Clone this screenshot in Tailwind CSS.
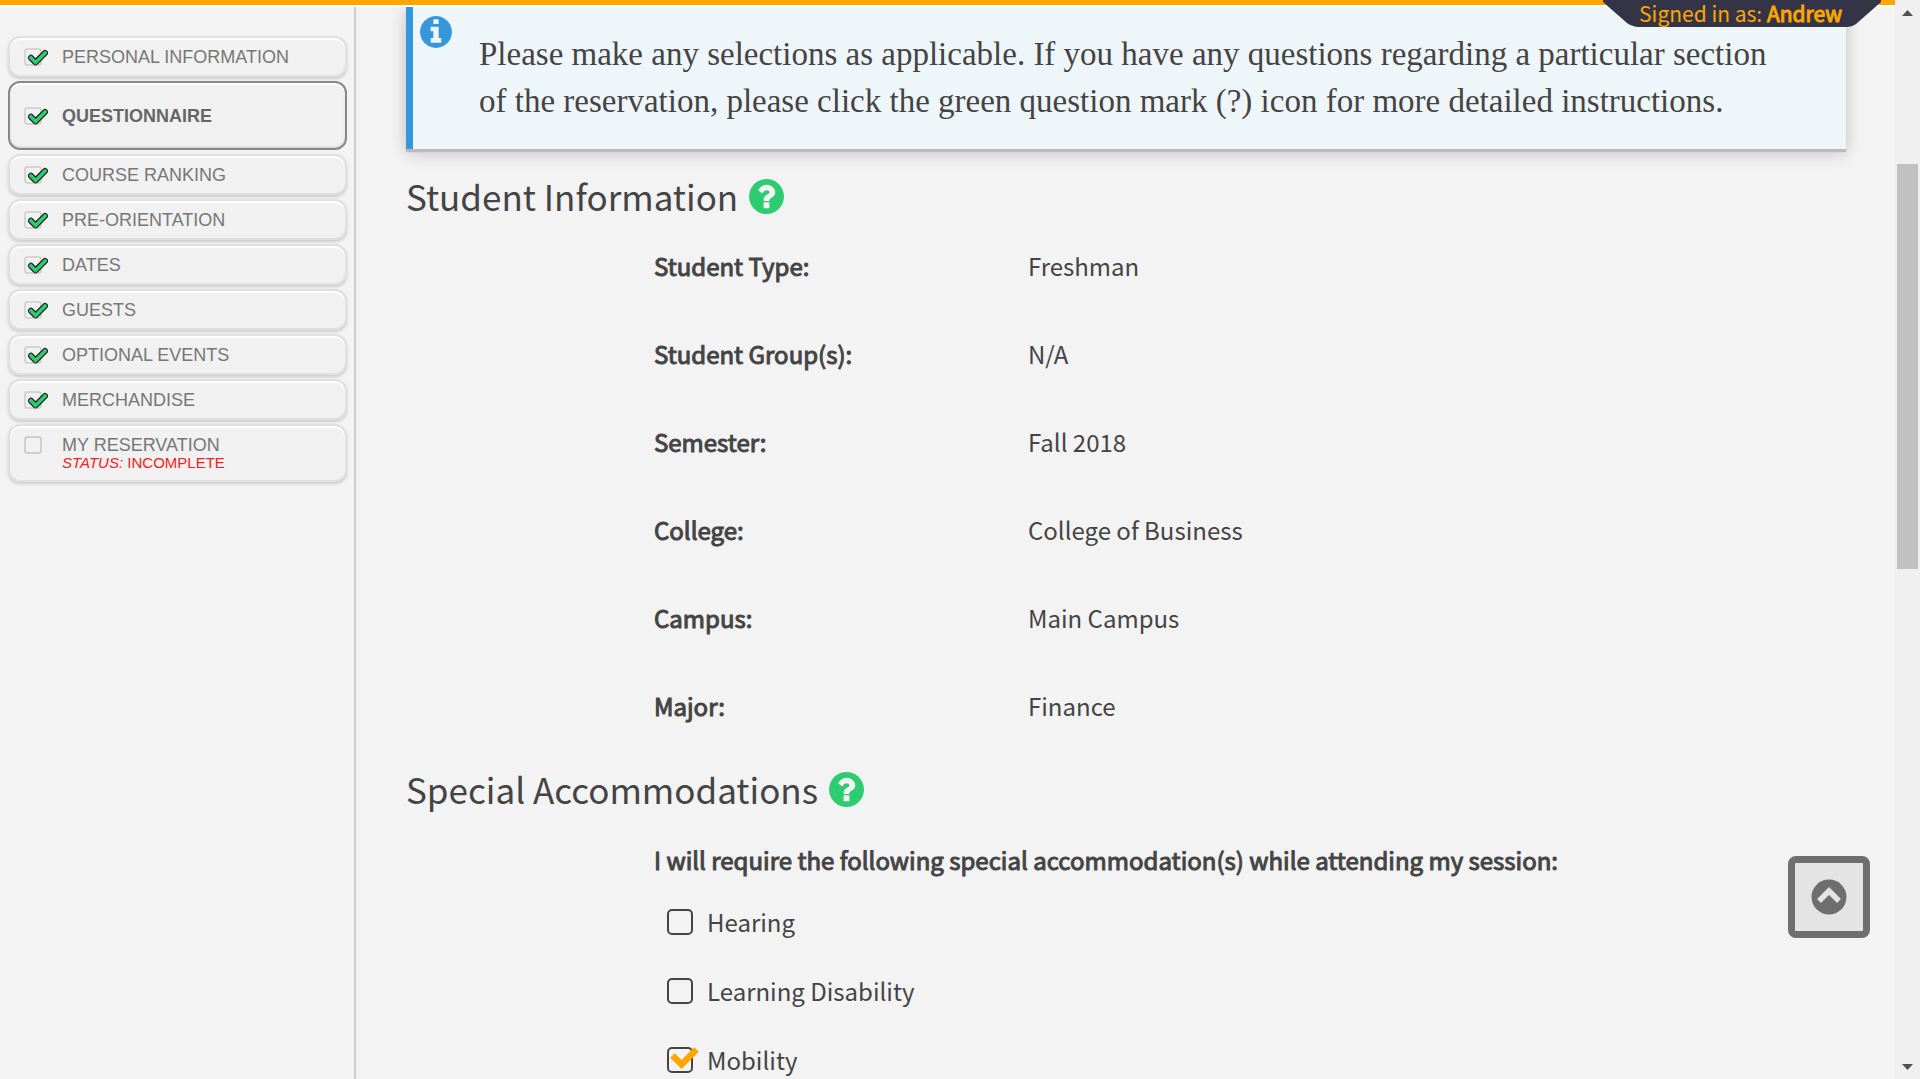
<!DOCTYPE html>
<html lang="en">
<head>
<meta charset="utf-8">
<title>Questionnaire</title>
<script src="https://cdn.jsdelivr.net/npm/@tailwindcss/browser@4"></script>
</head>
<body class="flex h-screen overflow-hidden bg-[#f3f3f3] font-['Noto_Sans_CJK_SC','Noto_Sans',sans-serif] text-[#444]">

<svg class="hidden" aria-hidden="true">
  <symbol id="done" viewBox="0 0 24 20">
    <rect x="1" y="2" width="16" height="16" rx="2.5" fill="none" stroke="#ccc" stroke-width="1.5"/>
    <path d="M7 10.8 11.6 15.4 21 6" fill="none" stroke="#151515" stroke-width="6" stroke-linejoin="round" stroke-linecap="round"/>
    <path d="M7 10.8 11.6 15.4 21 6" fill="none" stroke="#2ecc71" stroke-width="3.6" stroke-linecap="square"/>
  </symbol>
  <symbol id="todo" viewBox="0 0 24 20">
    <rect x="1" y="2" width="16" height="16" rx="2.5" fill="none" stroke="#c4c4c4" stroke-width="1.5"/>
  </symbol>
  <symbol id="help" viewBox="0 0 1536 1536">
    <path fill="#2ecc71" d="M896 1248v-192q0-14-9-23t-23-9H672q-14 0-23 9t-9 23v192q0 14 9 23t23 9h192q14 0 23-9t9-23zM1152 576q0-88-55.500-163T958 297t-170-41q-243 0-371 213-15 24 8 42l132 100q7 6 19 6 16 0 25-12 53-68 86-92 34-24 86-24 48 0 85.500 26t37.500 59q0 38-20 61t-68 45q-63 28-115.500 86.500T640 892v36q0 14 9 23t23 9h192q14 0 23-9t9-23q0-19 21.500-49.500T972 829q32-18 49-28.500t46-35 44.500-48 28-60.500 12.500-81zM1536 768q0 209-103 385.500T1153.500 1433 768 1536t-385.500-103T103 1153.500 0 768t103-385.500T382.500 103 768 0t385.500 103T1433 382.500 1536 768z"/>
  </symbol>
</svg>

<div class="relative flex min-w-0 flex-1 flex-col">
  <header class="shrink-0">
    <div class="h-[5px] bg-[orange]"></div>
    <div class="h-[2px] bg-white"></div>
    <div class="absolute top-0 right-[14px] z-10 h-[27px] w-[278px]">
      <svg class="absolute inset-0 h-full w-full" viewBox="0 0 278 27" preserveAspectRatio="none" aria-hidden="true"><path d="M0 0H278V2L253 24Q249 27 243 27H35Q28 26 24 23L0 2Z" fill="#333546"/></svg>
      <p class="relative pr-[39px] text-right text-[21px] leading-[26px] whitespace-nowrap text-[orange]">Signed in as: <span class="[-webkit-text-stroke:1px_orange]">Andrew</span></p>
    </div>
  </header>

  <div class="flex min-h-0 flex-1">
    <nav class="w-[356px] shrink-0 border-r-2 border-[#ccc] pt-[29px] pr-[7px] pl-[8px] font-['Liberation_Sans',Arial,sans-serif] text-[18px] leading-[18px] text-[#777]">
      <ul class="flex flex-col gap-[4px]">
        <li><a href="#" class="flex h-[41px] items-center gap-[14px] rounded-xl border-2 border-[#e0e0e0] bg-[#f1f1f1] pl-[14px] shadow-[0_2px_3px_#ccc,inset_0_2px_1px_#fff]"><svg class="h-5 w-6"><use href="#done"/></svg>PERSONAL INFORMATION</a></li>
        <li><a href="#" aria-current="page" class="flex h-[69px] items-center gap-[14px] rounded-xl border-2 border-[#888] bg-[#f1f1f1] pl-[14px] font-bold text-[#666] shadow-[inset_0_2px_1px_#fff,inset_0_-1px_2px_#ccc]"><svg class="h-5 w-6"><use href="#done"/></svg>QUESTIONNAIRE</a></li>
        <li><a href="#" class="flex h-[41px] items-center gap-[14px] rounded-xl border-2 border-[#e0e0e0] bg-[#f1f1f1] pl-[14px] shadow-[0_2px_3px_#ccc,inset_0_2px_1px_#fff]"><svg class="h-5 w-6"><use href="#done"/></svg>COURSE RANKING</a></li>
        <li><a href="#" class="flex h-[41px] items-center gap-[14px] rounded-xl border-2 border-[#e0e0e0] bg-[#f1f1f1] pl-[14px] shadow-[0_2px_3px_#ccc,inset_0_2px_1px_#fff]"><svg class="h-5 w-6"><use href="#done"/></svg>PRE-ORIENTATION</a></li>
        <li><a href="#" class="flex h-[41px] items-center gap-[14px] rounded-xl border-2 border-[#e0e0e0] bg-[#f1f1f1] pl-[14px] shadow-[0_2px_3px_#ccc,inset_0_2px_1px_#fff]"><svg class="h-5 w-6"><use href="#done"/></svg>DATES</a></li>
        <li><a href="#" class="flex h-[41px] items-center gap-[14px] rounded-xl border-2 border-[#e0e0e0] bg-[#f1f1f1] pl-[14px] shadow-[0_2px_3px_#ccc,inset_0_2px_1px_#fff]"><svg class="h-5 w-6"><use href="#done"/></svg>GUESTS</a></li>
        <li><a href="#" class="flex h-[41px] items-center gap-[14px] rounded-xl border-2 border-[#e0e0e0] bg-[#f1f1f1] pl-[14px] shadow-[0_2px_3px_#ccc,inset_0_2px_1px_#fff]"><svg class="h-5 w-6"><use href="#done"/></svg>OPTIONAL EVENTS</a></li>
        <li><a href="#" class="flex h-[41px] items-center gap-[14px] rounded-xl border-2 border-[#e0e0e0] bg-[#f1f1f1] pl-[14px] shadow-[0_2px_3px_#ccc,inset_0_2px_1px_#fff]"><svg class="h-5 w-6"><use href="#done"/></svg>MERCHANDISE</a></li>
        <li><a href="#" class="flex h-[58px] items-start gap-[14px] rounded-xl border-2 border-[#e0e0e0] bg-[#f1f1f1] pt-[9px] pl-[14px] shadow-[0_2px_3px_#ccc,inset_0_2px_1px_#fff]"><svg class="h-5 w-6"><use href="#todo"/></svg><span class="pt-px">MY RESERVATION<span class="block text-[15px] text-[#e22]"><em>STATUS:</em> INCOMPLETE</span></span></a></li>
      </ul>
    </nav>

    <main class="min-w-0 flex-1 overflow-hidden pr-[49px] pl-[50px]">
      <section class="flex border-l-[7px] border-[#3498db] bg-[#eff6fa] pb-[24px] shadow-[0_3px_1px_#bbb,0_4px_16px_rgba(0,0,0,0.2)]">
        <svg class="mt-[9px] ml-[7px] h-8 w-8 shrink-0" viewBox="0 0 1536 1536" role="img" aria-label="Information"><path fill="#3498db" d="M1024 1248v-160q0-14-9-23t-23-9h-96V544q0-14-9-23t-23-9H544q-14 0-23 9t-9 23v160q0 14 9 23t23 9h96v320h-96q-14 0-23 9t-9 23v160q0 14 9 23t23 9h448q14 0 23-9t9-23zM896 352V192q0-14-9-23t-23-9H672q-14 0-23 9t-9 23v160q0 14 9 23t23 9h192q14 0 23-9t9-23zM1536 768q0 209-103 385.500T1153.500 1433 768 1536t-385.500-103T103 1153.500 0 768t103-385.500T382.500 103 768 0t385.500 103T1433 382.500 1536 768z"/></svg>
        <p class="ml-[27px] pt-[24px] pr-[64px] font-['Georgia','Liberation_Serif',serif] text-[33px] leading-[47px]">Please make any selections as applicable. If you have any questions regarding a particular section of the reservation, please click the green question mark (?) icon for more detailed instructions.</p>
      </section>

      <h2 class="mt-[23px] flex h-[48px] items-center gap-[11px] text-[35px] leading-[48px]">Student Information <button type="button" aria-label="Help with student information"><svg class="h-[35px] w-[35px]"><use href="#help"/></svg></button></h2>
      <dl class="mt-[2px] pl-[248px] text-[24px] leading-[88px]">
        <div class="flex"><dt class="w-[374px] [-webkit-text-stroke:1px_#444]">Student Type:</dt><dd>Freshman</dd></div>
        <div class="flex"><dt class="w-[374px] [-webkit-text-stroke:1px_#444]">Student Group(s):</dt><dd>N/A</dd></div>
        <div class="flex"><dt class="w-[374px] [-webkit-text-stroke:1px_#444]">Semester:</dt><dd>Fall 2018</dd></div>
        <div class="flex"><dt class="w-[374px] [-webkit-text-stroke:1px_#444]">College:</dt><dd>College of Business</dd></div>
        <div class="flex"><dt class="w-[374px] [-webkit-text-stroke:1px_#444]">Campus:</dt><dd>Main Campus</dd></div>
        <div class="flex"><dt class="w-[374px] [-webkit-text-stroke:1px_#444]">Major:</dt><dd>Finance</dd></div>
      </dl>

      <h2 class="mt-[15px] flex h-[48px] items-center gap-[11px] text-[35px] leading-[48px]">Special Accommodations <button type="button" aria-label="Help with special accommodations"><svg class="h-[35px] w-[35px]"><use href="#help"/></svg></button></h2>
      <fieldset class="pl-[248px] text-[24px]">
        <legend class="pt-[31px] leading-[32px] [-webkit-text-stroke:1px_#444]">I will require the following special accommodation(s) while attending my session:</legend>
        <div class="flex flex-col pt-[11px] pl-[13px] leading-[69px]">
          <label class="flex h-[69px] items-center gap-[14px]"><input type="checkbox" class="h-[26px] w-[26px] appearance-none rounded-[5px] border-2 border-[#444]">Hearing</label>
          <label class="flex h-[69px] items-center gap-[14px]"><input type="checkbox" class="h-[26px] w-[26px] appearance-none rounded-[5px] border-2 border-[#444]">Learning Disability</label>
          <label class="relative flex h-[69px] items-center gap-[14px]"><input type="checkbox" checked class="h-[26px] w-[26px] appearance-none rounded-[5px] border-2 border-[#444]"><svg class="absolute left-[3px] h-[26px] w-[30px] overflow-visible" viewBox="0 0 30 26" aria-hidden="true"><path d="M2.500 8.500 11.500 17.500 26.500 2.500" fill="none" stroke="orange" stroke-width="6.500"/></svg>Mobility</label>
        </div>
      </fieldset>
    </main>
  </div>

  <button type="button" aria-label="Back to top" class="absolute right-[25px] bottom-[141px] flex h-[82px] w-[82px] items-center justify-center rounded-lg border-[7px] border-[#6e6e6e] bg-[#e4e4e4]">
    <svg class="h-[36px] w-[36px]" viewBox="0 0 36 36" aria-hidden="true"><circle cx="18" cy="18" r="17.500" fill="#6e6e6e"/><path d="M8 22 18 12l10 10" fill="none" stroke="#e4e4e4" stroke-width="5.500"/></svg>
  </button>
</div>

<div class="flex w-[25px] shrink-0 flex-col items-center bg-[#f0f0f0]" aria-hidden="true">
  <svg class="mt-[10px] h-[6px] w-[11px]" viewBox="0 0 11 6"><path d="M0 6 5.500 0 11 6z" fill="#505050"/></svg>
  <div class="mt-[148px] h-[405px] w-[21px] bg-[#c1c1c1]"></div>
  <svg class="mt-auto mb-[9px] h-[6px] w-[11px]" viewBox="0 0 11 6"><path d="M0 0h11L5.500 6z" fill="#505050"/></svg>
</div>
</body>
</html>
